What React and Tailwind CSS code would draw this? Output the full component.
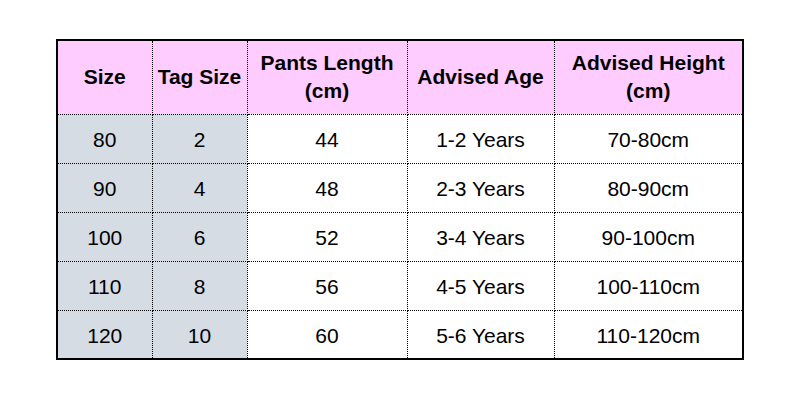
import React from 'react';

const rows = [
  ['80', '2', '44', '1-2 Years', '70-80cm'],
  ['90', '4', '48', '2-3 Years', '80-90cm'],
  ['100', '6', '52', '3-4 Years', '90-100cm'],
  ['110', '8', '56', '4-5 Years', '100-110cm'],
  ['120', '10', '60', '5-6 Years', '110-120cm'],
];

const widths = ['w-[95px]', 'w-[95px]', 'w-[160px]', 'w-[147px]', 'w-[189px]'];

export default function App() {
  return (
    <div className="w-[800px] h-[400px] bg-white pl-[56px] pt-[39px] font-['Liberation_Sans',Arial,sans-serif] text-black">
      <table className="border-collapse border-2 border-black table-fixed">
        <thead>
          <tr className="h-[74px] bg-[#ffccff]">
            {['Size', 'Tag Size', 'Pants Length (cm)', 'Advised Age', 'Advised Height (cm)'].map((h, i) => (
              <th
                key={h}
                className={`${widths[i]} border border-dotted border-black px-0 text-[21px] font-bold leading-[28px] text-center`}
              >
                {h === 'Pants Length (cm)' ? (
                  <>Pants Length<br />(cm)</>
                ) : h === 'Advised Height (cm)' ? (
                  <>Advised Height<br />(cm)</>
                ) : (
                  h
                )}
              </th>
            ))}
          </tr>
        </thead>
        <tbody>
          {rows.map((r) => (
            <tr key={r[0]} className="h-[49px]">
              {r.map((c, i) => (
                <td
                  key={i}
                  className={`border border-dotted border-black text-center text-[21px] pt-[3px] ${i < 2 ? 'bg-[#d6dce4]' : 'bg-white'}`}
                >
                  {c}
                </td>
              ))}
            </tr>
          ))}
        </tbody>
      </table>
    </div>
  );
}
